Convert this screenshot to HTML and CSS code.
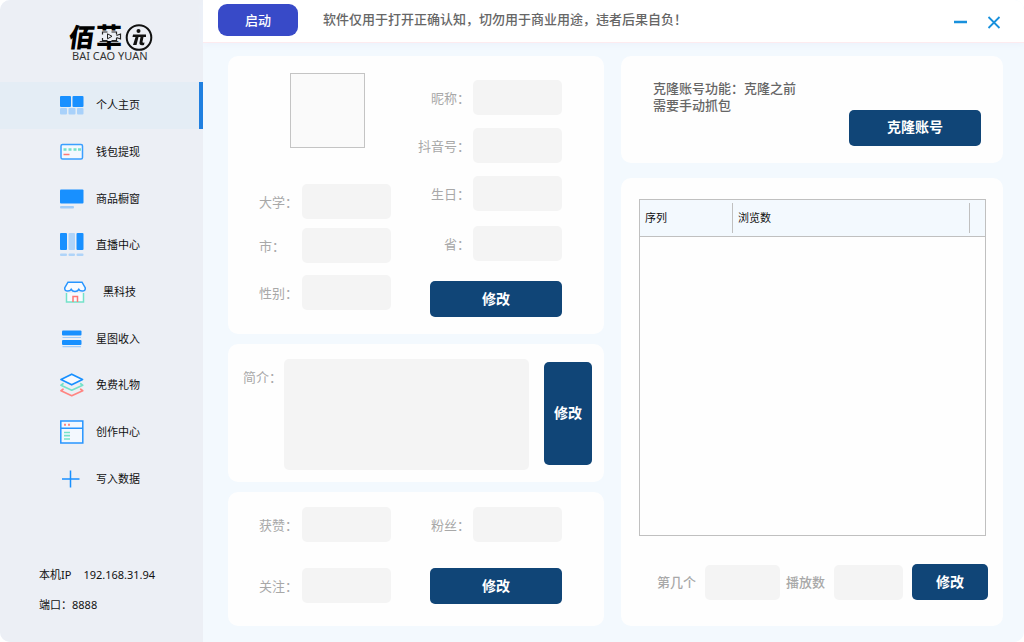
FILE: index.html
```html
<!DOCTYPE html>
<html lang="zh-CN">
    <head>
        <meta charset="utf-8">
        <meta name="viewport" content="width=device-width, initial-scale=1.0">
        <title>佰草元</title>
        <link rel="stylesheet" href="styles.css">
    </head>
    <body>
        <div class="window">
            <aside class="sidebar">
                <svg class="logo" width="86" height="40" viewBox="0 0 86 40">
                    <text class="logo-char" transform="skewX(-8)" x="3" y="24">佰</text>
                    <text class="logo-char" x="28" y="24">草</text>
                    <!-- camera in the middle of the second character -->
                    <rect x="28" y="8" width="27" height="10" fill="#eceff5"/>
                    <path d="M34.500 11.500v-2.500h5M43.500 9h5v2.500M34.500 15v2.500h5M43.500 17.500h5V15M48.500 12.500l4-1.500v5l-4-1.500" fill="none" stroke="#222" stroke-width="1.200"/>
                    <path d="M39.500 10.800v5l4.500-2.500z" fill="none" stroke="#222" stroke-width="1"/>
                    <circle cx="71" cy="14.500" r="12.300" fill="none" stroke="#111" stroke-width="2"/>
                    <circle cx="70.500" cy="8" r="2" fill="#111"/>
                    <path d="M65 11.500h13v2.500h-2.500l-1 5q0 1 2 .5l-.5 2.500q-5 1-4.500-2.500l1-5.500h-2l-2 8h-3.500l2.500-8h-3z" fill="#111"/>
                    <text class="logo-latin" x="4" y="37">BAI CAO YUAN</text>
                </svg>

                <nav class="menu">
                    <a class="active" href="#home">
                        <svg width="24" height="24" viewBox="0 0 24 24">
                            <g fill="#1890ff"><rect x="0" y="3" width="11" height="11" rx="1"/><rect x="12.500" y="3" width="11" height="11" rx="1"/></g>
                            <g fill="#a8d1fa"><rect x="0" y="15" width="7" height="6.500" rx="1"/><rect x="8.500" y="15" width="7" height="6.500" rx="1"/><rect x="17" y="15" width="6.500" height="6.500" rx="1"/></g>
                        </svg>
                        <span>个人主页</span>
                    </a>
                    <a href="#wallet">
                        <svg width="24" height="24" viewBox="0 0 24 24">
                            <rect x="1" y="4.500" width="21.500" height="14.500" rx="1.500" fill="#f3f8fe" stroke="#3a9fff" stroke-width="1.500"/>
                            <path d="M3.500 9.500h3m2 0h3m2 0h3m1.500 0h3" stroke="#74e2c9" stroke-width="2.500"/>
                            <path d="M3.500 14.500h6" stroke="#ff7875" stroke-width="1.500"/>
                        </svg>
                        <span>钱包提现</span>
                    </a>
                    <a href="#shop">
                        <svg width="24" height="24" viewBox="0 0 24 24">
                            <rect x="0" y="2.500" width="23.500" height="14" rx="1" fill="#1890ff"/>
                            <rect x="0" y="19" width="14" height="2.500" rx="1" fill="#a1ccf8"/>
                        </svg>
                        <span>商品橱窗</span>
                    </a>
                    <a href="#live">
                        <svg width="24" height="24" viewBox="0 0 24 24">
                            <g fill="#1890ff"><rect x="0" y="0" width="7" height="17" rx="1"/><rect x="16.500" y="0" width="7" height="17" rx="1"/></g>
                            <g fill="#afd4f9"><rect x="8.500" y="0" width="6.500" height="17" rx="1"/><rect x="0" y="20.500" width="7" height="2.500" rx="1"/><rect x="8.500" y="20.500" width="6.500" height="2.500" rx="1"/><rect x="16.500" y="20.500" width="7" height="2.500" rx="1"/></g>
                        </svg>
                        <span>直播中心</span>
                    </a>
                    <a class="indent" href="#tech">
                        <svg width="24" height="24" viewBox="0 0 24 24">
                            <path d="M2.500 13v9h17v-9" fill="#f8fbff" stroke="#74e2c9" stroke-width="1.500"/>
                            <path d="M4 2.200h14l3.200 5.500q.5 3.300-3 3.300-2.500 0-3.400-1.700-1.300 2.200-3.800 2.200t-3.800-2.200Q6.300 11 3.800 11 .300 11 .800 7.700z" fill="#f8fbff" stroke="#2795ff" stroke-width="1.500"/>
                            <path d="M9 22v-5.500h4.500V22" fill="none" stroke="#ff7875" stroke-width="1.500"/>
                        </svg>
                        <span>黑科技</span>
                    </a>
                    <a href="#income">
                        <svg width="24" height="24" viewBox="0 0 24 24">
                            <g fill="#1890ff"><rect x="2" y="3.500" width="19.500" height="5" rx="1"/><rect x="2" y="13" width="19.500" height="5" rx="1"/></g>
                            <path d="M2.500 10.500h18.500M2.500 19.700h18.500" stroke="#9fccfa" stroke-width="1.200"/>
                        </svg>
                        <span>星图收入</span>
                    </a>
                    <a href="#gift">
                        <svg width="24" height="24" viewBox="0 0 24 24" fill="none" stroke-width="1.700" stroke-linejoin="round" stroke-linecap="round">
                            <path d="M3 16.200l-2 1.500 10.700 5 11-5-2-1.500" stroke="#ff8582"/>
                            <path d="M3 10.700l-2 1.500 10.700 5 11-5-2-1.500" stroke="#74e2c9"/>
                            <path d="M11.700 1.200l10.800 5.300-10.800 5.300L1 6.500z" fill="#f6faff" stroke="#1890ff"/>
                        </svg>
                        <span>免费礼物</span>
                    </a>
                    <a href="#create">
                        <svg width="24" height="24" viewBox="0 0 24 24">
                            <path d="M.800 1h22v22h-22zM.800 8.200h22" fill="#f3f8fe" stroke="#2795ff" stroke-width="1.500"/>
                            <path d="M4 4.700h2m2 0h2" stroke="#ff8582" stroke-width="2"/>
                            <path d="M4 12.500h6M4 15.700h6M4 19h6" stroke="#74e2c9" stroke-width="1.700"/>
                        </svg>
                        <span>创作中心</span>
                    </a>
                    <a href="#write">
                        <svg width="24" height="24" viewBox="0 0 24 24">
                            <path d="M10.500 3.500v17M2 12h17.500" stroke="#1890ff" stroke-width="1.500"/>
                        </svg>
                        <span>写入数据</span>
                    </a>
                </nav>

                <div class="host">
                    <p><span>本机IP</span><span class="ip">192.168.31.94</span></p>
                    <p>端口：8888</p>
                </div>
            </aside>

            <div class="main">
                <header class="topbar">
                    <button class="start" type="button">启动</button>
                    <p class="notice">软件仅用于打开正确认知，切勿用于商业用途，违者后果自负！</p>
                    <div class="controls">
                        <button type="button" aria-label="最小化">
                            <svg width="14" height="14" viewBox="0 0 14 14"><path d="M1 7h13" stroke="#1890dc" stroke-width="2.500"/></svg>
                        </button>
                        <button type="button" aria-label="关闭">
                            <svg width="14" height="14" viewBox="0 0 14 14"><path d="M1.500 2l11 11M12.500 2l-11 11" stroke="#1890dc" stroke-width="1.800"/></svg>
                        </button>
                    </div>
                </header>

                <main class="content">
                    <div class="column left">
                        <form class="card profile">
                            <div class="fields basic">
                                <div class="avatar"></div>
                                <div class="field"><label for="school">大学：</label><input id="school" type="text"></div>
                                <div class="field"><label for="city">市：</label><input id="city" type="text"></div>
                                <div class="field"><label for="gender">性别：</label><input id="gender" type="text"></div>
                            </div>
                            <div class="fields end account">
                                <div class="field"><label for="nick">昵称：</label><input id="nick" type="text"></div>
                                <div class="field"><label for="douyin">抖音号：</label><input id="douyin" type="text"></div>
                                <div class="field"><label for="birthday">生日：</label><input id="birthday" type="text"></div>
                                <div class="field"><label for="province">省：</label><input id="province" type="text"></div>
                                <button class="btn" type="button">修改</button>
                            </div>
                        </form>

                        <form class="card intro">
                            <label for="intro">简介：</label>
                            <textarea id="intro"></textarea>
                            <button class="btn tall" type="button">修改</button>
                        </form>

                        <form class="card stats">
                            <div class="fields">
                                <div class="field"><label for="likes">获赞：</label><input id="likes" type="text"></div>
                                <div class="field"><label for="follow">关注：</label><input id="follow" type="text"></div>
                            </div>
                            <div class="fields end">
                                <div class="field"><label for="fans">粉丝：</label><input id="fans" type="text"></div>
                                <button class="btn" type="button">修改</button>
                            </div>
                        </form>
                    </div>

                    <div class="column right">
                        <section class="card clone">
                            <p>克隆账号功能：克隆之前<br>需要手动抓包</p>
                            <button class="btn" type="button">克隆账号</button>
                        </section>

                        <section class="card views">
                            <div class="list">
                                <table>
                                    <thead>
                                        <tr><th class="no"><span>序列</span></th><th><span>浏览数</span></th><th class="rest"></th></tr>
                                    </thead>
                                </table>
                            </div>
                            <form class="edit">
                                <label for="index">第几个</label>
                                <input id="index" type="text">
                                <label for="plays">播放数</label>
                                <input class="short" id="plays" type="text">
                                <button class="btn small" type="button">修改</button>
                            </form>
                        </section>
                    </div>
                </main>
            </div>
        </div>
    </body>
</html>
```

FILE: styles.css
```css
* {
    box-sizing: border-box;
}

body {
    margin: 0;
    background: #fff;
    color: #111;
    font-family: "Noto Sans", "Noto Sans CJK SC", sans-serif;
    font-size: 13px;
}

p {
    margin: 0;
}

button,
input,
textarea {
    border: 0;
    font: inherit;
}

.window {
    display: flex;
    min-height: 100vh;
    border-radius: 10px;
    overflow: hidden;
    background: #f3f9fe;
}

/* sidebar */
.sidebar {
    display: flex;
    flex-direction: column;
    width: 203px;
    background: #eceff5;
}

.logo {
    margin: 23px 0 19px 68px;
    overflow: visible;
}

.logo-char {
    font-family: "Noto Sans CJK SC", sans-serif;
    font-size: 26px;
    font-weight: 900;
}

.logo-latin {
    font-size: 11px;
    fill: #333;
}

.menu {
    display: grid;
    grid-auto-rows: 1fr;
    height: 420px;
}

.menu a {
    display: flex;
    align-items: center;
    gap: 12px;
    padding-left: 60px;
    color: #111;
    font-size: 11px;
    text-decoration: none;
}

.menu a span {
    padding-bottom: 2px;
}

.menu a.active {
    background: #e4edf5;
    border-right: 4px solid #2080e0;
}

.menu a.indent {
    gap: 15px;
    padding-left: 64px;
}

.host {
    display: grid;
    gap: 14px;
    margin-top: auto;
    padding: 0 0 29px 39px;
    font-size: 11px;
    line-height: 16px;
}

.host .ip {
    margin-left: 12px;
}

/* top bar */
.main {
    display: flex;
    flex: 1;
    flex-direction: column;
    min-width: 0;
}

.topbar {
    display: flex;
    align-items: center;
    height: 43px;
    padding: 0 23px 2px 15px;
    background: #fff;
    border-bottom: 1px solid #fdebef;
    box-shadow: 0 2px 6px #ecf2fc;
}

.start {
    width: 80px;
    height: 32px;
    padding: 0 0 1px;
    border-radius: 9px;
    background: #384ac8;
    color: #fff;
    font-weight: 500;
}

.notice {
    margin-left: 25px;
    padding-bottom: 2px;
    color: #666;
    font-weight: 500;
    line-height: 18px;
}

.controls {
    display: flex;
    gap: 20px;
    margin-left: auto;
}

.controls button {
    display: flex;
    padding: 4px 0 0;
    background: none;
}

/* cards */
.content {
    display: grid;
    flex: 1;
    grid-template-columns: 376fr 382fr;
    gap: 17px;
    padding: 13px 21px 16px 25px;
}

.column {
    display: flex;
    flex-direction: column;
    gap: 10px;
}

.right {
    gap: 15px;
}

.card {
    display: flex;
    border-radius: 10px;
    background: #fefefe;
}

input,
textarea {
    min-width: 0;
    padding: 0 8px;
    border-radius: 5px;
    background: #f4f4f4;
    resize: none;
}

input {
    height: 35px;
}

label {
    padding-bottom: 1px;
    color: #a8a8a8;
    white-space: nowrap;
}

.btn {
    width: 132px;
    height: 36px;
    padding: 0 0 3px;
    border-radius: 5px;
    background: #104577;
    color: #fff;
    font-size: 14px;
    font-weight: 700;
}

.btn.tall {
    width: 48px;
    height: 103px;
    margin-top: 3px;
}

.btn.small {
    width: 76px;
}

.profile,
.stats {
    justify-content: space-between;
    padding: 17px 42px 17px 31px;
}

.fields {
    display: grid;
    align-content: start;
    align-items: start;
    grid-template-rows: 61px 36px;
}

.field {
    display: flex;
    align-items: center;
}

.field label {
    width: 43px;
}

.field input {
    width: 89px;
}

.end {
    justify-items: end;
}

.end .field label {
    width: auto;
    margin-right: 3px;
}

.basic {
    grid-template-rows: 111px 44px 47px 36px;
}

.account {
    grid-template-rows: 48px 48px 50px 55px 36px;
    padding-top: 7px;
}

.avatar {
    width: 75px;
    height: 75px;
    margin-left: 31px;
    border: 1px solid #c4c4c4;
    background: #fafafa;
}

.intro {
    align-items: flex-start;
    padding: 15px 12px 12px 15px;
}

.intro label {
    width: 41px;
    padding-top: 8px;
}

.intro textarea {
    flex: 1;
    height: 111px;
    margin-right: 15px;
}

.stats {
    flex: 1;
    padding-top: 15px;
}

.profile {
    height: 278px;
}

.clone {
    justify-content: space-between;
    padding: 24px 22px 17px 32px;
    color: #666;
    font-weight: 500;
    line-height: 17px;
}

.clone .btn {
    margin-top: 30px;
}

.views {
    flex: 1;
    flex-direction: column;
    padding: 21px 15px 26px 18px;
}

.list {
    flex: 1;
    margin-right: 2px;
    border: 1px solid #c0c0c0;
}

.list table {
    width: 100%;
    border-collapse: collapse;
    table-layout: fixed;
}

.list th {
    height: 36px;
    padding: 3px 0 2px;
    border-bottom: 1px solid #c0c0c0;
    background: #f3f9fe;
    font-size: 11px;
    font-weight: 400;
    line-height: 30px;
    text-align: left;
}

.list th span {
    display: block;
    padding-left: 5px;
    border-right: 1px solid #c0c0c0;
}

.list .no {
    width: 93px;
}

.list .rest {
    width: 15px;
}

.edit {
    display: flex;
    align-items: center;
    justify-content: flex-end;
    padding-top: 28px;
}

.edit label {
    font-weight: 500;
}

.edit input {
    width: 75px;
    margin: 0 6px 0 9px;
}

.edit input.short {
    width: 69px;
    margin-right: 9px;
}
```
